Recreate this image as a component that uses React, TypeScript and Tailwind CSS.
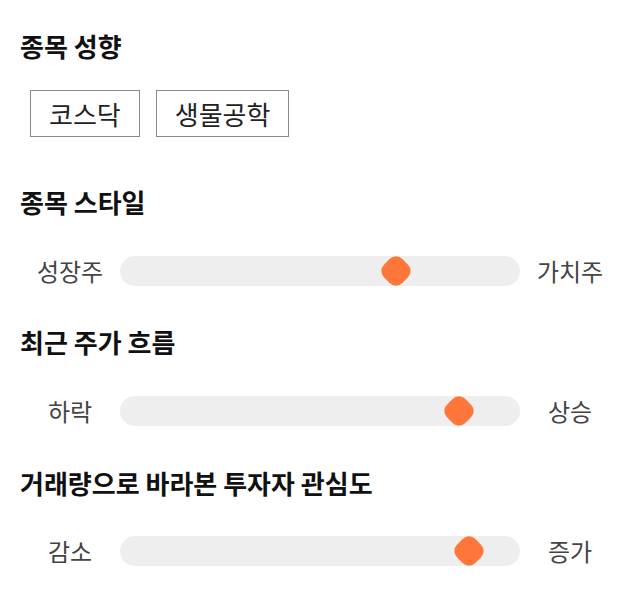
import React from "react";

const font = { fontFamily: '"Noto Sans CJK KR", "Noto Sans", sans-serif' };

function Heading({ children, className = "" }: { children: React.ReactNode; className?: string }) {
  return (
    <h2 className={`h-[34px] text-[26px] leading-[34px] font-bold text-[#111111] ${className}`}>{children}</h2>
  );
}

function Slider({
  left,
  right,
  thumbClass,
  className = "",
}: {
  left: string;
  right: string;
  thumbClass: string;
  className?: string;
}) {
  return (
    <div className={`flex h-[30px] items-center ${className}`}>
      <div className="w-[100px] text-center text-[24px] leading-[30px] text-[#444444]">{left}</div>
      <div className="relative h-[30px] flex-1 rounded-full bg-[#eeeeee]">
        <div
          className={`absolute top-1/2 h-[26px] w-[26px] -translate-x-1/2 -translate-y-1/2 rotate-45 rounded-[9px] bg-[#ff763b] ${thumbClass}`}
        />
      </div>
      <div className="w-[100px] text-center text-[24px] leading-[30px] text-[#444444]">{right}</div>
    </div>
  );
}

export default function App() {
  return (
    <div className="min-h-[606px] w-[640px] bg-white px-5 pt-[29px]" style={font}>
      <Heading>종목 성향</Heading>
      <div className="ml-[10px] mt-[27px] flex gap-4">
        <div className="flex h-[47px] items-center border border-[#8a8a8a] px-[18px] text-[26px] text-[#222222]">
          코스닥
        </div>
        <div className="flex h-[47px] items-center border border-[#8a8a8a] px-[18px] text-[26px] text-[#222222]">
          생물공학
        </div>
      </div>

      <Heading className="mt-[48px]">종목 스타일</Heading>
      <Slider className="mt-[37px]" left="성장주" right="가치주" thumbClass="left-[276px]" />

      <Heading className="mt-[39px]">최근 주가 흐름</Heading>
      <Slider className="mt-[37px]" left="하락" right="상승" thumbClass="left-[339px]" />

      <Heading className="mt-[40px]">거래량으로 바라본 투자자 관심도</Heading>
      <Slider className="mt-[36px]" left="감소" right="증가" thumbClass="left-[349px]" />
    </div>
  );
}
